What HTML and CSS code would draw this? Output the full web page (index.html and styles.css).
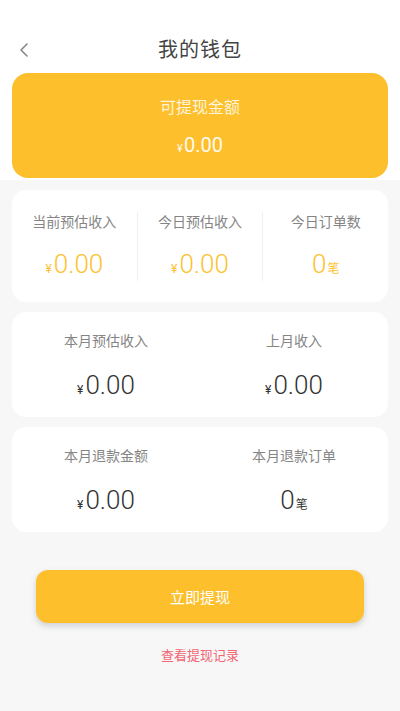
FILE: index.html
```html
<!DOCTYPE html>
<html lang="zh-CN">
<head>
  <meta charset="UTF-8" />
  <title>我的钱包</title>
  <link rel="stylesheet" href="styles.css">
</head>
<body>
  <div class="top">
    <div class="nav">
      <span class="back">
        <svg width="12" height="16" viewBox="0 0 12 16"><path d="M9 2 L3 8 L9 14" fill="none" stroke="#888" stroke-width="1.6" stroke-linecap="round" stroke-linejoin="round"/></svg>
      </span>
      <div class="title">我的钱包</div>
    </div>
    <div class="balance">
      <div class="balance-label">可提现金额</div>
      <div class="balance-num"><span class="yen">¥</span>0.00</div>
    </div>
  </div>

  <div class="cards">
    <div class="card three">
      <div class="item">
        <div class="label">当前预估收入</div>
        <div class="num gold"><span class="yen">¥</span>0.00</div>
      </div>
      <div class="item">
        <div class="label">今日预估收入</div>
        <div class="num gold"><span class="yen">¥</span>0.00</div>
      </div>
      <div class="item">
        <div class="label">今日订单数</div>
        <div class="num gold">0<span class="unit">笔</span></div>
      </div>
    </div>

    <div class="card two">
      <div class="item">
        <div class="label">本月预估收入</div>
        <div class="num"><span class="yen">¥</span>0.00</div>
      </div>
      <div class="item">
        <div class="label">上月收入</div>
        <div class="num"><span class="yen">¥</span>0.00</div>
      </div>
    </div>

    <div class="card two">
      <div class="item">
        <div class="label">本月退款金额</div>
        <div class="num"><span class="yen">¥</span>0.00</div>
      </div>
      <div class="item">
        <div class="label">本月退款订单</div>
        <div class="num">0<span class="unit">笔</span></div>
      </div>
    </div>
  </div>

  <div class="actions">
    <button class="withdraw">立即提现</button>
    <a class="record" href="#">查看提现记录</a>
  </div>
</body>
</html>
```

FILE: styles.css
```css
body {
  margin: 0;
  background: #f7f7f7;
  font-family: Roboto, "Noto Sans CJK SC", sans-serif;
  color: #333;
}

.top {
  background: #fff;
  padding: 0 12px 2px;
}

.nav {
  position: relative;
  height: 43px;
  padding-top: 30px;
}

.back {
  position: absolute;
  left: 6px;
  top: 42px;
  display: flex;
}

.title {
  text-align: center;
  font-size: 20px;
  line-height: 40px;
  height: 40px;
  color: #444;
  letter-spacing: 1px;
}

.balance {
  background: #fdbf2b;
  border-radius: 16px;
  padding: 24px 0 19px;
  text-align: center;
  color: #fff;
}

.balance-label {
  font-size: 16px;
  line-height: 22px;
  height: 22px;
  color: #fff4da;
}

.balance-num {
  margin-top: 12px;
  font-size: 20px;
  line-height: 28px;
  height: 28px;
  color: #fffaf0;
}

.balance-num .yen {
  font-size: 11px;
  line-height: 1;
  margin-right: 1px;
}

.cards {
  display: flex;
  flex-direction: column;
  gap: 10px;
  padding: 10px 12px 0;
}

.card {
  background: #fff;
  border-radius: 14px;
  display: flex;
}

.card .item {
  flex: 1;
  text-align: center;
}

.card.three {
  padding: 22px 0 21px;
}

.card.three .item + .item {
  border-left: 1px solid #f0f0f0;
}

.card.two {
  padding: 19px 0 15px;
}

.label {
  font-size: 14px;
  line-height: 20px;
  height: 20px;
  color: #858585;
}

.num {
  margin-top: 17px;
  font-size: 26px;
  font-weight: 300;
  line-height: 34px;
  height: 34px;
  color: #333;
}

.card.three .num {
  margin-top: 15px;
}

.num.gold {
  color: #fdc22f;
}

.num .yen {
  font-size: 12px;
  font-weight: 400;
  line-height: 1;
  margin-right: 2px;
}

.num .unit {
  font-size: 12px;
  font-weight: 400;
  line-height: 1;
  margin-left: 1px;
}

.actions {
  display: flex;
  flex-direction: column;
  align-items: center;
  padding: 38px 36px 0;
}

.withdraw {
  width: 100%;
  height: 53px;
  border: none;
  border-radius: 12px;
  background: #fdbf2b;
  color: #fff;
  font-family: "Noto Sans CJK SC", sans-serif;
  font-size: 15px;
  box-shadow: 0 3px 6px rgba(60, 70, 90, 0.22);
}

.record {
  margin-top: 23px;
  font-size: 13px;
  line-height: 20px;
  color: #f26572;
  text-decoration: none;
}
```
